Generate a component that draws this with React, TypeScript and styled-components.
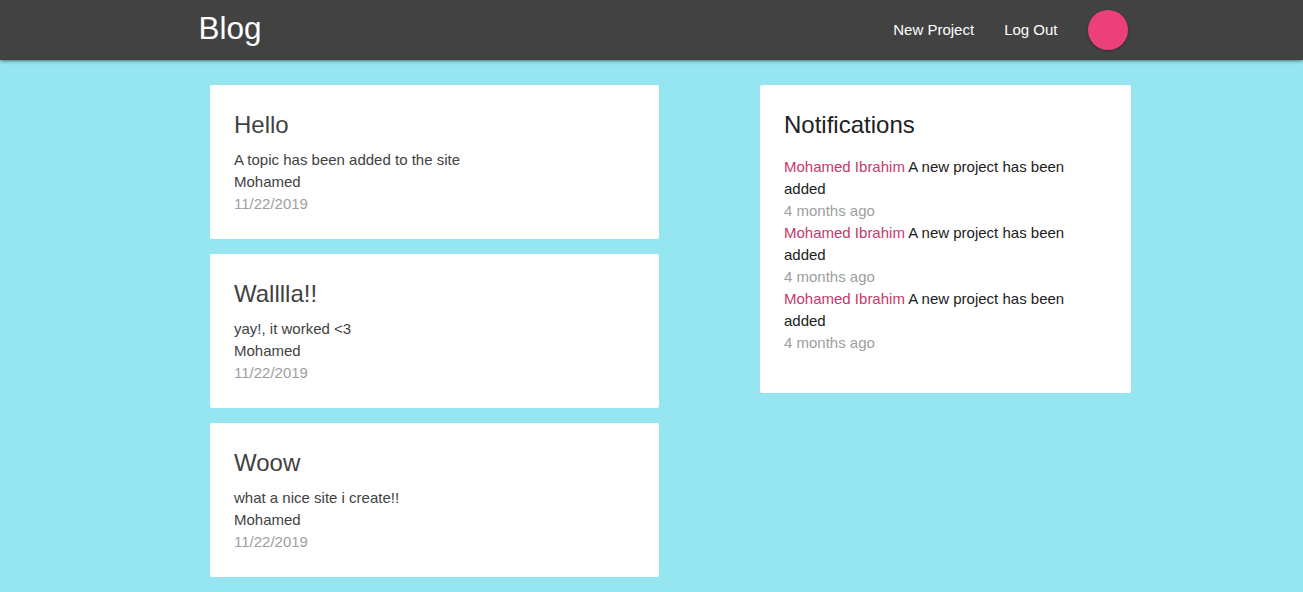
import React from "react";
import styled, { createGlobalStyle } from "styled-components";

const GlobalStyle = createGlobalStyle`
  html, body {
    margin: 0;
    padding: 0;
  }
  body {
    background: #96e6f2;
    font-family: Roboto, "Liberation Sans", Arial, sans-serif;
    font-size: 15px;
    line-height: 1.5;
    color: rgba(0, 0, 0, 0.87);
    min-height: 592px;
  }
`;

const NavBar = styled.nav`
  height: 60px;
  background: #424242;
  box-shadow: 0 2px 2px 0 rgba(0, 0, 0, 0.14), 0 3px 1px -2px rgba(0, 0, 0, 0.12),
    0 1px 5px 0 rgba(0, 0, 0, 0.2);
`;

const NavInner = styled.div`
  width: 932px;
  height: 100%;
  margin-left: calc(50% - 456px);
  display: flex;
  align-items: center;
  justify-content: space-between;
`;

const Brand = styled.a`
  font-family: "Liberation Sans", Arial, sans-serif;
  font-size: 31.5px;
  color: #fff;
  text-decoration: none;
  line-height: 1;
  margin-top: -2px;
  padding-left: 3px;
`;

const NavLinks = styled.ul`
  list-style: none;
  margin: 0;
  padding: 0;
  display: flex;
  align-items: center;
`;

const NavLink = styled.a`
  font-family: "Liberation Sans", Arial, sans-serif;
  font-size: 15px;
  color: #fff;
  text-decoration: none;
  padding: 0 15px;
  display: block;
  line-height: 60px;
`;

const Avatar = styled.span`
  display: block;
  width: 40px;
  height: 40px;
  border-radius: 50%;
  background: #ec407a;
  margin-left: 15px;
  box-shadow: 0 1px 3px rgba(0, 0, 0, 0.3);
`;

const Dashboard = styled.main`
  display: grid;
  grid-template-columns: 449px 371px;
  column-gap: 101px;
  align-items: start;
  margin-left: calc(50% - 441.5px);
  padding-top: 25px;
`;

const Column = styled.section`
  display: flex;
  flex-direction: column;
  gap: 15px;
`;

const Card = styled.div`
  background: #fff;
  border-radius: 2px;
  padding: 24px;
  font-family: "Liberation Sans", Arial, sans-serif;
`;

const CardTitle = styled.span<{ $dark?: boolean }>`
  display: block;
  font-size: 24px;
  font-weight: 300;
  line-height: 32px;
  margin-bottom: 8px;
  color: ${(p) => (p.$dark ? "#212121" : "#424242")};
`;

const Line = styled.p<{ $muted?: boolean }>`
  margin: 0;
  font-size: 15px;
  line-height: 22px;
  color: ${(p) => (p.$muted ? "#9e9e9e" : "#424242")};
`;

const NoteList = styled.ul`
  list-style: none;
  padding: 0;
  margin: 15px 0;
`;

const NoteItem = styled.li`
  font-size: 15px;
  line-height: 22px;
  color: #212121;
`;

const NoteUser = styled.span`
  color: #c8386a;
`;

const NoteDate = styled.div`
  color: #9e9e9e;
`;

const projects = [
  { title: "Hello", content: "A topic has been added to the site" },
  { title: "Walllla!!", content: "yay!, it worked <3" },
  { title: "Woow", content: "what a nice site i create!!" },
];

export default function App() {
  return (
    <>
      <GlobalStyle />
      <NavBar>
        <NavInner>
          <Brand href="#">Blog</Brand>
          <NavLinks>
            <li>
              <NavLink href="#">New Project</NavLink>
            </li>
            <li>
              <NavLink href="#">Log Out</NavLink>
            </li>
            <li>
              <Avatar />
            </li>
          </NavLinks>
        </NavInner>
      </NavBar>
      <Dashboard>
        <Column>
          {projects.map((p) => (
            <Card key={p.title}>
              <CardTitle>{p.title}</CardTitle>
              <Line>{p.content}</Line>
              <Line>Mohamed</Line>
              <Line $muted>11/22/2019</Line>
            </Card>
          ))}
        </Column>
        <Column>
          <Card>
            <CardTitle $dark>Notifications</CardTitle>
            <NoteList>
              {[0, 1, 2].map((i) => (
                <NoteItem key={i}>
                  <NoteUser>Mohamed Ibrahim</NoteUser> A new project has been added
                  <NoteDate>4 months ago</NoteDate>
                </NoteItem>
              ))}
            </NoteList>
          </Card>
        </Column>
      </Dashboard>
    </>
  );
}
